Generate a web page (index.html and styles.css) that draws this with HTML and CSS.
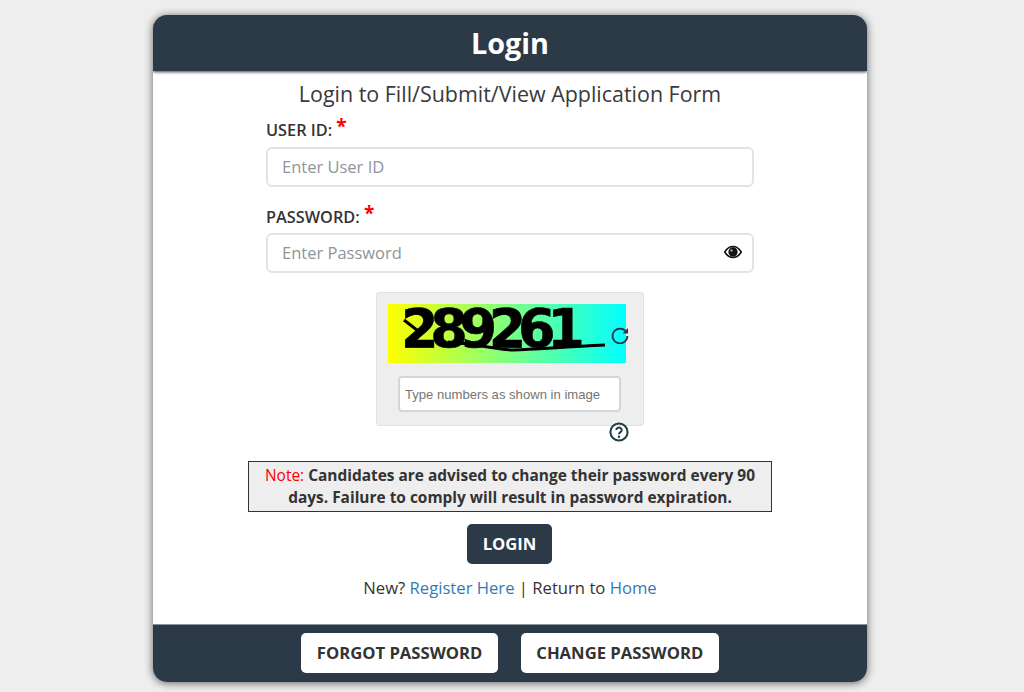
FILE: index.html
```html
<!DOCTYPE html>
<html lang="en">
<head>
<meta charset="utf-8">
<title>Login</title>
<link rel="stylesheet" href="styles.css">
</head>
<body>
<main class="card">
  <header class="card-head"><h1>Login</h1></header>
  <section class="card-body">
    <h2 class="subtitle">Login to Fill/Submit/View Application Form</h2>
    <form class="form">
      <label class="label">USER ID: <span class="req">*</span></label>
      <input class="input" type="text" placeholder="Enter User ID">
      <label class="label label-second">PASSWORD: <span class="req">*</span></label>
      <div class="pw-wrap">
        <input class="input" type="password" placeholder="Enter Password">
        <svg class="eye" viewBox="0 0 24 24" width="18" height="18" aria-hidden="true">
          <path d="M1 12C4 7 8 4.6 12 4.6S20 7 23 12c-3 5-7 7.4-11 7.4S4 17 1 12Z" fill="#fff" stroke="#111" stroke-width="2"/>
          <circle cx="12" cy="12" r="6.2" fill="#111"/>
          <circle cx="10" cy="10" r="1.6" fill="#fff" opacity=".6"/>
        </svg>
      </div>
    </form>
    <div class="captcha-area">
      <div class="captcha">
        <div class="captcha-img">
          <span class="captcha-num">289261</span>
          <svg class="captcha-line" viewBox="0 0 238 59" width="238" height="59" aria-hidden="true">
            <path d="M16 16 34 30M60 38C90 40 105 45 125 46 150 45 175 43 217 41" fill="none" stroke="#000" stroke-width="3"/>
          </svg>
          <svg class="refresh" viewBox="0 0 18 18" width="18" height="18" aria-hidden="true">
            <path d="M15 5.6A7.4 7.4 0 1 0 16.4 10" fill="none" stroke="#1f3a48" stroke-width="1.8"/>
            <path d="M17 2v5.4h-5.4Z" fill="#1f3a48"/>
          </svg>
        </div>
        <input class="captcha-input" type="text" placeholder="Type numbers as shown in image">
      </div>
      <svg class="help" viewBox="0 0 20 20" width="20" height="20" aria-hidden="true">
        <circle cx="10" cy="10" r="8.6" fill="none" stroke="#1f3a48" stroke-width="2"/>
        <path d="M7.3 8a2.7 2.5 0 1 1 4.2 2.1c-1 .7-1.5 1.1-1.5 2.2" fill="none" stroke="#1f3a48" stroke-width="2"/>
        <circle cx="10" cy="14.8" r="1.2" fill="#1f3a48"/>
      </svg>
    </div>
    <p class="note"><span class="note-tag">Note:</span> <b>Candidates are advised to change their password every 90 days. Failure to comply will result in password expiration.</b></p>
    <button class="btn btn-dark" type="button">LOGIN</button>
    <p class="links">New? <a href="#">Register Here</a> | Return to <a href="#">Home</a></p>
  </section>
  <footer class="card-foot">
    <button class="btn btn-light" type="button">FORGOT PASSWORD</button>
    <button class="btn btn-light btn-change" type="button">CHANGE PASSWORD</button>
  </footer>
</main>
</body>
</html>
```
FILE: styles.css
```css
* { box-sizing: border-box; }
html, body { height: 100%; }
body {
  margin: 0;
  padding-top: 15px;
  background: #eeeeee;
  font-family: "Open Sans", "Liberation Sans", sans-serif;
  color: #333;
  overflow: hidden;
}
.card {
  width: 714px;
  height: 667px;
  margin: 0 auto 0 153px;
  background: #fff;
  border-radius: 14px;
  box-shadow: 0 1px 8px rgba(0,0,0,.6);
  display: flex;
  flex-direction: column;
  overflow: hidden;
}
.card-head {
  height: 56px;
  flex: none;
  background: #2c3a47;
  box-shadow: 0 1px 3px rgba(0,0,0,.75);
  display: flex;
  align-items: center;
  justify-content: center;
}
.card-head h1 {
  margin: 0;
  color: #fff;
  font-size: 28.8px;
  line-height: 56px;
  font-weight: 700;
}
.card-body {
  flex: 1;
  display: flex;
  flex-direction: column;
  align-items: center;
  min-height: 0;
}
.subtitle {
  margin: 8px 0 0;
  font-size: 21.45px;
  line-height: 30px;
  font-weight: 400;
  color: #3a3a3a;
}
.form {
  width: 488px;
  display: flex;
  flex-direction: column;
}
.label {
  display: block;
  font-size: 16.3px;
  font-weight: 600;
  line-height: 22px;
  height: 28px;
  margin-top: 10px;
  color: #333;
}
.label-second { margin-top: 19px; height: 27px; }
.req {
  color: #f00;
  font-size: 19px;
  font-weight: 700;
  line-height: 16px;
  position: relative;
  top: -3px;
}
.input {
  display: block;
  width: 100%;
  height: 40px;
  padding: 0 14px 1px;
  border: 2px solid #e1e3e6;
  border-radius: 6px;
  background: #fff;
  font-family: inherit;
  font-size: 16.5px;
  color: #333;
}
.input::placeholder { color: #8e959b; opacity: 1; }
.pw-wrap { position: relative; }
.eye { position: absolute; right: 12px; top: 10px; }
.captcha-area {
  position: relative;
  width: 268px;
  margin-top: 19px;
}
.captcha {
  height: 134px;
  padding: 11px 0 0;
  background: #eeeeee;
  border: 1px solid #dfe1e3;
  border-radius: 3px;
  display: flex;
  flex-direction: column;
  align-items: flex-start;
}
.captcha-img {
  position: relative;
  width: 238px;
  height: 59px;
  flex: none;
  margin-left: 11px;
  background: linear-gradient(90deg, #ffff00 0%, #00ffff 100%);
  padding-left: 13px;
}
.captcha-num {
  display: block;
  font-family: "DejaVu Sans", sans-serif;
  font-size: 54px;
  font-weight: 700;
  line-height: 49px;
  letter-spacing: -8.3px;
  color: #000;
  -webkit-text-stroke: .6px #000;
}
.captcha-line { position: absolute; left: 0; top: 0; }
.refresh { position: absolute; right: -3px; top: 22px; }
.captcha-input {
  width: 223px;
  height: 36px;
  margin-top: 13px;
  margin-left: 21px;
  padding: 0 5px;
  border: 2px solid #d4d7da;
  border-radius: 4px;
  background: #fff;
  font-family: "Liberation Sans", sans-serif;
  font-size: 13.1px;
  color: #333;
}
.captcha-input::placeholder { color: #757575; opacity: 1; }
.help { position: absolute; left: 233px; top: 130px; }
.note {
  width: 524px;
  height: 51px;
  margin: 35px 0 0;
  padding: 2px 14px 0;
  background: #eeeeee;
  border: 1px solid #333;
  text-align: center;
  font-size: 15.45px;
  line-height: 22px;
}
.note b { font-weight: 700; }
.note-tag { color: #f00; }
.btn {
  height: 40px;
  padding: 0 15.5px 2px;
  border: 0;
  border-radius: 5px;
  font-family: inherit;
  font-size: 16.65px;
  font-weight: 700;
}
.btn-dark {
  width: 85px;
  padding: 0 0 2px;
  margin-top: 12px;
  margin-right: 1px;
  flex: none;
  background: #2c3a47;
  color: #fff;
}
.links {
  margin: 12px 0 0;
  font-size: 16.65px;
  line-height: 24px;
  color: #333;
}
.links a { color: #337ab7; text-decoration: none; }
.card-foot {
  height: 58px;
  flex: none;
  background: #2c3a47;
  box-shadow: inset 0 1px 0 #8a929a;
  display: flex;
  align-items: center;
  justify-content: center;
  gap: 23px;
}
.btn-light { background: #fff; color: #333; }
```
